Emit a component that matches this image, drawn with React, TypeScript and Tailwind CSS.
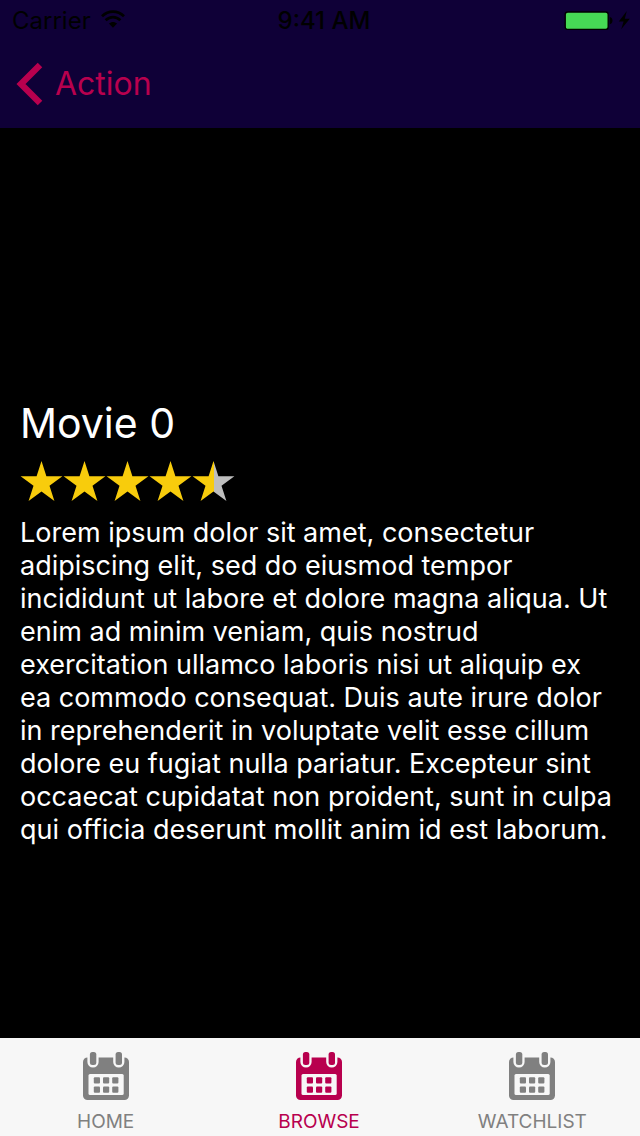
const lines = [
  'Lorem ipsum dolor sit amet, consectetur',
  'adipiscing elit, sed do eiusmod tempor',
  'incididunt ut labore et dolore magna aliqua. Ut',
  'enim ad minim veniam, quis nostrud',
  'exercitation ullamco laboris nisi ut aliquip ex',
  'ea commodo consequat. Duis aute irure dolor',
  'in reprehenderit in voluptate velit esse cillum',
  'dolore eu fugiat nulla pariatur. Excepteur sint',
  'occaecat cupidatat non proident, sunt in culpa',
  'qui officia deserunt mollit anim id est laborum.',
];

const tabs = [
  { name: 'HOME', active: false },
  { name: 'BROWSE', active: true },
  { name: 'WATCHLIST', active: false },
];

const STAR = 'M21.5 1 L26.4 16.2 H42.4 L29.5 25.7 L34.4 41 L21.5 31.6 L8.6 41 L13.5 25.7 L0.6 16.2 H16.6 Z';

function StatusBar() {
  return (
    <div className="grid h-10 grid-cols-3 items-center pt-px text-2xl leading-7 text-black">
      <div className="flex items-center gap-[10px] pl-3">
        <span>Carrier</span>
        <svg className="-mt-1 h-[18px] w-6 shrink-0" viewBox="0 0 24 18" fill="none" stroke="currentColor" strokeWidth="2.8" aria-hidden="true">
          <path d="M1 6.2 C7.4 0 16.6 0 23 6.2" />
          <path d="M4.6 10.2 C9 6 15 6 19.4 10.2" />
          <path d="M7.9 13.6 C10.4 11.3 13.6 11.3 16.1 13.6 L12 17.8 Z" fill="currentColor" stroke="none" />
        </svg>
      </div>
      <div className="whitespace-nowrap pl-2 text-center font-medium">9:41 AM</div>
      <svg className="mr-2 h-[22px] w-[68px] justify-self-end" viewBox="0 0 68 22" aria-label="Battery charging">
        <rect x="1.2" y="2" width="43" height="17.4" rx="2.5" fill="#46d955" stroke="#000" strokeWidth="1.4" />
        <path d="M45.8 7 C49.4 7.7 49.4 13.5 45.8 14.2 Z" fill="#000" />
        <path d="M62.8 1 L54.8 11.4 H59.6 L57.2 19.2 L65.8 8.8 H60.8 Z" fill="#000" />
      </svg>
    </div>
  );
}

function Rating() {
  return (
    <svg className="h-[42px] w-[215px]" viewBox="0 0 215 42" role="img" aria-label="4.5 out of 5 stars">
      <defs>
        <linearGradient id="half">
          <stop offset="50%" stopColor="#f8cc0c" />
          <stop offset="50%" stopColor="#bebebe" />
        </linearGradient>
      </defs>
      {[0, 1, 2, 3, 4].map((i) => (
        <path key={i} d={STAR} transform={`translate(${i * 43} 0)`} fill={i === 4 ? 'url(#half)' : '#f8cc0c'} />
      ))}
    </svg>
  );
}

function CalendarIcon() {
  return (
    <svg className="h-12 w-[46px]" viewBox="0 0 46 48" aria-hidden="true">
      <rect x="0" y="5.5" width="46" height="42.5" rx="4.5" fill="currentColor" />
      <path d="M4.4 4 H15.6 V10 A5.6 5.6 0 0 1 4.4 10 Z M30.2 4 H41.4 V10 A5.6 5.6 0 0 1 30.2 10 Z" fill="#f7f7f7" />
      <rect x="6.9" y="0" width="6.4" height="13" rx="2.5" fill="currentColor" />
      <rect x="32.6" y="0" width="6.4" height="13" rx="2.5" fill="currentColor" />
      <rect x="5.5" y="22" width="35.2" height="21" rx="1.5" fill="#f7f7f7" />
      {[10.8, 20, 29.2].map((x) =>
        [25.2, 34.6].map((y) => <rect key={`${x}-${y}`} x={x} y={y} width="6.2" height="6.2" rx="1" fill="currentColor" />),
      )}
    </svg>
  );
}

export default function App() {
  return (
    <div className="flex min-h-screen flex-col bg-black font-['Inter','Liberation_Sans',sans-serif]">
      <header className="bg-[#0f0037]">
        <StatusBar />
        <nav className="flex h-[88px] items-center pl-4">
          <button type="button" className="flex items-center gap-3 text-[32px] leading-10 text-[#b8004e]">
            <svg className="h-[44px] w-[27px]" viewBox="0 0 27 44" fill="none" stroke="currentColor" strokeWidth="6.4" aria-hidden="true">
              <path d="M24 3 L5 22 L24 41" />
            </svg>
            Action
          </button>
        </nav>
      </header>

      <main className="flex-1 px-5 pt-[269px] text-white">
        <h1 className="text-[41px] leading-[52px]">Movie 0</h1>
        <div className="mt-[11px] flex">
          <Rating />
        </div>
        <p className="mt-[14px] whitespace-nowrap text-[27px] leading-[33px]">
          {lines.map((line) => (
            <span key={line} className="block">
              {line}
            </span>
          ))}
        </p>
      </main>

      <footer className="grid h-[98px] grid-cols-3 bg-[#f7f7f7]">
        {tabs.map((tab) => (
          <button
            key={tab.name}
            type="button"
            aria-current={tab.active ? 'page' : undefined}
            className={`flex flex-col items-center gap-[10px] pr-[2px] pt-[14px] text-[19px] leading-6 ${tab.active ? 'text-[#b8004e]' : 'text-[#808080]'}`}
          >
            <CalendarIcon />
            <span>{tab.name}</span>
          </button>
        ))}
      </footer>
    </div>
  );
}
